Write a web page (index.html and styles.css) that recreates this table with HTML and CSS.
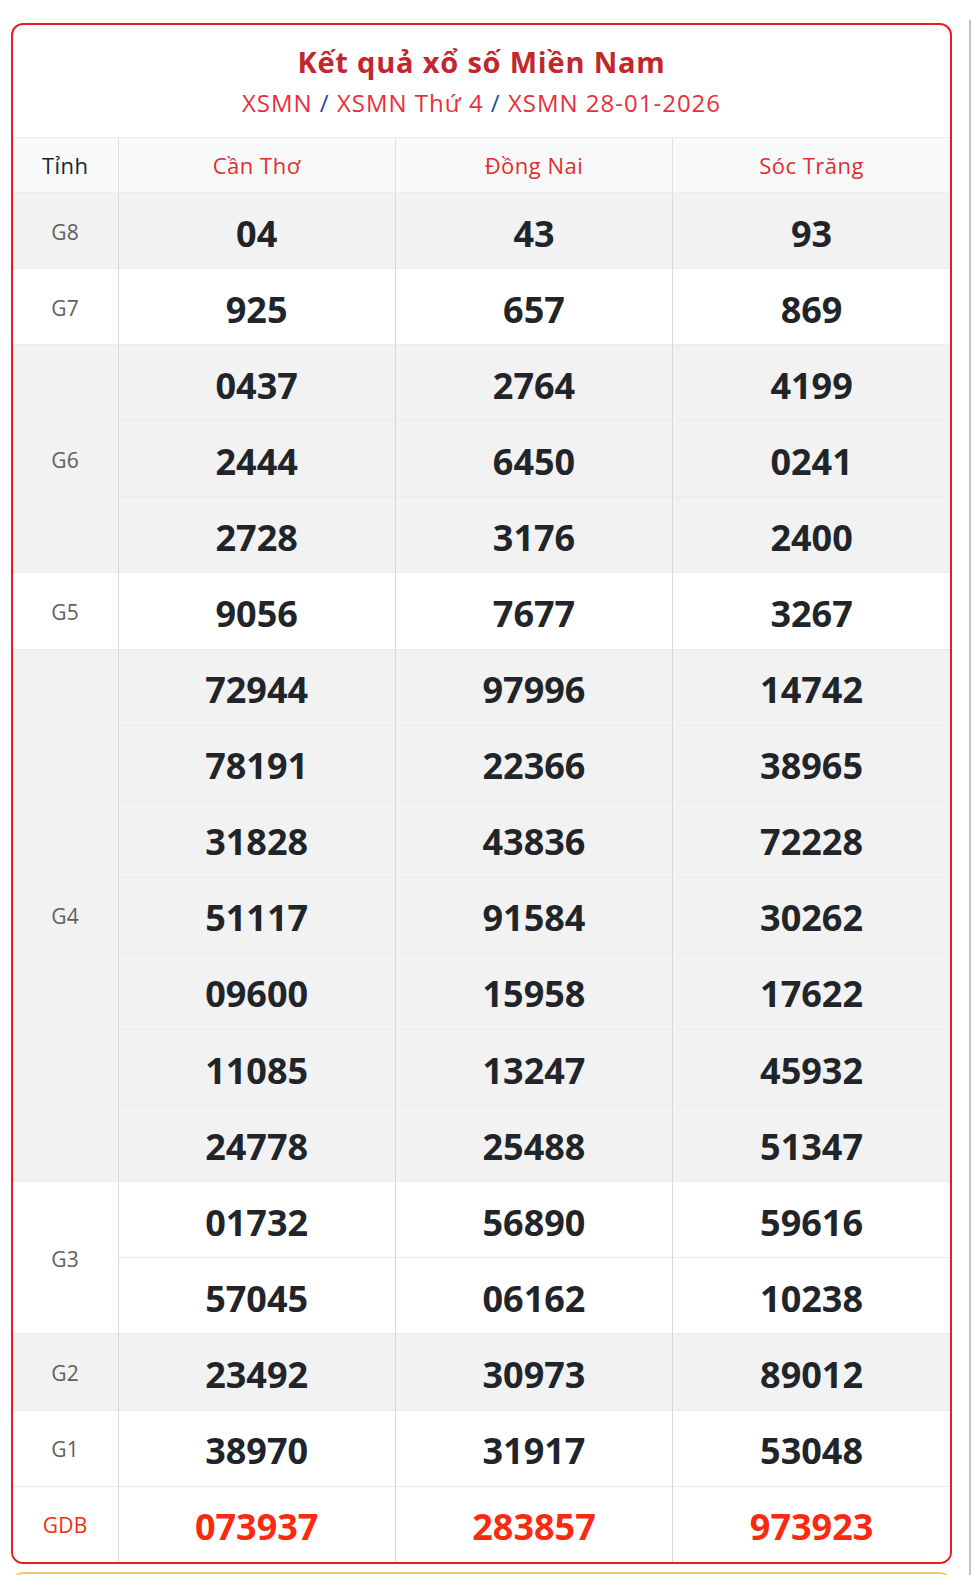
FILE: index.html
```html
<!DOCTYPE html>
<html lang="vi">
<head>
<meta charset="utf-8">
<title>Kết quả xổ số Miền Nam</title>
<link rel="stylesheet" href="styles.css">
</head>
<body>
<div class="page">
  <main class="main">
    <section class="card">
      <header class="card-head">
        <h1 class="title">Kết quả xổ số Miền Nam</h1>
        <div class="crumbs"><a>XSMN</a> <span class="sep">/</span> <a>XSMN Thứ 4</a> <span class="sep">/</span> <a>XSMN 28-01-2026</a></div>
      </header>
      <table class="results">
        <colgroup><col class="c-label"><col><col><col></colgroup>
        <thead>
          <tr><th class="h-label">Tỉnh</th><th>Cần Thơ</th><th>Đồng Nai</th><th>Sóc Trăng</th></tr>
        </thead>
        <tbody class="odd">
          <tr><td class="lbl">G8</td><td>04</td><td>43</td><td>93</td></tr>
        </tbody>
        <tbody class="even">
          <tr><td class="lbl">G7</td><td>925</td><td>657</td><td>869</td></tr>
        </tbody>
        <tbody class="odd">
          <tr><td class="lbl" rowspan="3">G6</td><td>0437</td><td>2764</td><td>4199</td></tr>
          <tr><td>2444</td><td>6450</td><td>0241</td></tr>
          <tr><td>2728</td><td>3176</td><td>2400</td></tr>
        </tbody>
        <tbody class="even">
          <tr><td class="lbl">G5</td><td>9056</td><td>7677</td><td>3267</td></tr>
        </tbody>
        <tbody class="odd">
          <tr><td class="lbl" rowspan="7">G4</td><td>72944</td><td>97996</td><td>14742</td></tr>
          <tr><td>78191</td><td>22366</td><td>38965</td></tr>
          <tr><td>31828</td><td>43836</td><td>72228</td></tr>
          <tr><td>51117</td><td>91584</td><td>30262</td></tr>
          <tr><td>09600</td><td>15958</td><td>17622</td></tr>
          <tr><td>11085</td><td>13247</td><td>45932</td></tr>
          <tr><td>24778</td><td>25488</td><td>51347</td></tr>
        </tbody>
        <tbody class="even">
          <tr><td class="lbl" rowspan="2">G3</td><td>01732</td><td>56890</td><td>59616</td></tr>
          <tr><td>57045</td><td>06162</td><td>10238</td></tr>
        </tbody>
        <tbody class="odd">
          <tr><td class="lbl">G2</td><td>23492</td><td>30973</td><td>89012</td></tr>
        </tbody>
        <tbody class="even">
          <tr><td class="lbl">G1</td><td>38970</td><td>31917</td><td>53048</td></tr>
        </tbody>
        <tbody class="even special">
          <tr><td class="lbl">GDB</td><td>073937</td><td>283857</td><td>973923</td></tr>
        </tbody>
      </table>
    </section>
    <section class="next-card"></section>
  </main>
  <aside class="side"></aside>
</div>
</body>
</html>
```

FILE: styles.css
```css
html, body {
  margin: 0;
  padding: 0;
  background: #ffffff;
  overflow: hidden;
}
body {
  font-family: "Open Sans", "Noto Sans", sans-serif;
  color: #212529;
}
.page {
  display: flex;
  gap: 17px;
  padding: 23px 0 0 11px;
}
.main {
  width: 941px;
  flex: none;
}
.card {
  border: 2px solid #ec1c24;
  border-radius: 12px;
  overflow: hidden;
  background: #fff;
}
.card-head {
  text-align: center;
  padding: 17px 0 14px;
}
.title {
  margin: 0;
  font-size: 29px;
  letter-spacing: 0.8px;
  line-height: 40px;
  font-weight: 700;
  color: #c1272d;
}
.crumbs {
  margin-top: 1px;
  font-size: 24px;
  letter-spacing: 1px;
  line-height: 40px;
  color: #e53935;
}
.crumbs a { color: #e5313c; }
.crumbs .sep { color: #1d4f8f; }
.results {
  width: 100%;
  border-collapse: collapse;
  table-layout: fixed;
}
.c-label { width: 105px; }
.results th {
  height: 54px;
  padding: 0;
  background: #f8f9fa;
  font-size: 22px;
  letter-spacing: 0.5px;
  font-weight: 400;
  color: #e12d2d;
  border-top: 1px solid #e9ecef;
  border-left: 1px solid #dee2e6;
  border-bottom: 1px solid #e9ecef;
}
.results th.h-label { color: #212529; border-left: 0; }
.results td {
  height: 69.1px;
  padding: 6px 0 0;
  text-align: center;
  font-size: 36px;
  font-weight: 700;
  line-height: 40px;
  color: #212529;
  border-top: 1px solid #ebebeb;
  border-left: 1px solid #d9d9d9;
}
.results td.lbl {
  padding: 2px 0 0;
  font-size: 21px;
  letter-spacing: 0.3px;
  font-weight: 400;
  color: #5f5f5f;
  border-left: 0;
}
.results tbody.odd td { background: #f2f2f2; }
.results tbody.even td { background: #ffffff; }
.results tbody.special td { color: #fa2a10; }
.results tbody.special td.lbl { color: #fa2a10; }
.next-card {
  margin-top: 8px;
  height: 40px;
  border: 2px solid #f7c66e;
  border-radius: 12px;
}
.side {
  flex: 1 1 0;
  min-width: 0;
  margin-top: -3px;
  height: 1600px;
  border-left: 2px solid #c4c4c4;
  background: #fafafa;
}
```
